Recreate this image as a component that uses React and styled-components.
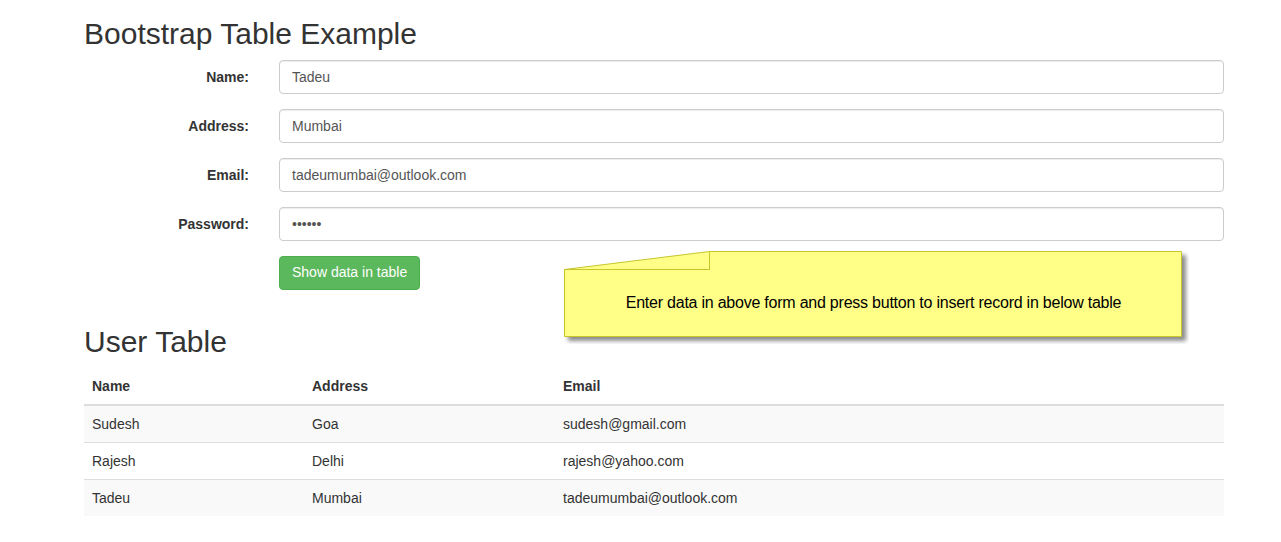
import React from 'react';
import styled, { createGlobalStyle } from 'styled-components';

const GlobalStyle = createGlobalStyle`
	* { box-sizing: border-box; }
	body {
		margin: 0;
		background: #fff;
		color: #333;
		font-family: "Liberation Sans", Arial, Helvetica, sans-serif;
		font-size: 14px;
		line-height: 1.42857;
	}
`

const Page = styled.div`
	position: relative;
	display: flow-root;
	width: 1140px;
	margin-left: 84px;
`

const Title = styled.h2`
	font-size: 30px;
	font-weight: 500;
	line-height: 1.1;
	margin: ${props => props.first ? '17px' : '20px'} 0 10px;
	color: #333;
`

const Form = styled.form`
	display: flex;
	flex-direction: column;
`

const FormGroup = styled.div`
	display: grid;
	grid-template-columns: 165px 945px;
	column-gap: 30px;
	align-items: center;
	margin-bottom: 15px;
`

const Label = styled.label`
	text-align: right;
	font-weight: bold;
	padding-top: 2px;
	grid-column: 1;
`

const Input = styled.input`
	grid-column: 2;
	display: block;
	width: 100%;
	height: 34px;
	padding: 6px 12px;
	font-family: inherit;
	font-size: 14px;
	line-height: 1.42857;
	color: #555;
	background: #fff;
	border: 1px solid #ccc;
	border-radius: 4px;
	box-shadow: inset 0 1px 1px rgba(0,0,0,.075);
	outline: none;
`

const Button = styled.button`
	grid-column: 2;
	justify-self: start;
	height: 34px;
	padding: 6px 12px;
	font-family: inherit;
	font-size: 14px;
	line-height: 1.42857;
	color: #fff;
	background: #5cb85c;
	border: 1px solid #4cae4c;
	border-radius: 4px;
	cursor: pointer;
`

const Note = styled.div`
	position: absolute;
	left: 480px;
	top: 251px;
	width: 625px;
	height: 93px;
`

const NoteShape = styled.svg`
	position: absolute;
	left: 0;
	top: 0;
`

const NoteText = styled.div`
	position: absolute;
	left: 0;
	top: 18px;
	width: 619px;
	height: 68px;
	display: flex;
	align-items: center;
	justify-content: center;
	color: #000;
	font-size: 16px;
	letter-spacing: -0.23px;
`

const Table = styled.table`
	width: 100%;
	border-collapse: collapse;
	border-spacing: 0;
	table-layout: fixed;
`

const Th = styled.th`
	text-align: left;
	padding: 9px 8px 7px;
	line-height: 1.42857;
	border-bottom: 2px solid #ddd;
	width: ${props => props.w || 'auto'};
`

const Tr = styled.tr`
	background: ${props => props.striped ? '#f9f9f9' : '#fff'};
`

const Td = styled.td`
	padding: 9px 8px 7px;
	line-height: 1.42857;
	border-top: 1px solid #ddd;
`

const users = [
	{ name: 'Sudesh', address: 'Goa', email: 'sudesh@gmail.com' },
	{ name: 'Rajesh', address: 'Delhi', email: 'rajesh@yahoo.com' },
	{ name: 'Tadeu', address: 'Mumbai', email: 'tadeumumbai@outlook.com' },
]

const App = () => {
	return (
		<>
			<GlobalStyle />
			<Page>
				<Title first>Bootstrap Table Example</Title>
				<Form onSubmit={e => e.preventDefault()}>
					<FormGroup>
						<Label>Name:</Label>
						<Input type="text" defaultValue="Tadeu" />
					</FormGroup>
					<FormGroup>
						<Label>Address:</Label>
						<Input type="text" defaultValue="Mumbai" />
					</FormGroup>
					<FormGroup>
						<Label>Email:</Label>
						<Input type="email" defaultValue="tadeumumbai@outlook.com" />
					</FormGroup>
					<FormGroup>
						<Label>Password:</Label>
						<Input type="password" defaultValue="123456" />
					</FormGroup>
					<FormGroup>
						<Button type="submit">Show data in table</Button>
					</FormGroup>
				</Form>

				<Note>
					<NoteShape width="625" height="93" viewBox="0 0 625 93">
						<defs>
							<filter id="blur" x="-5%" y="-5%" width="110%" height="120%">
								<feGaussianBlur stdDeviation="2" />
							</filter>
						</defs>
						<polygon points="4,22 149,4 622,4 622,90 4,90" fill="rgba(0,0,0,0.45)" filter="url(#blur)" />
						<polygon points="0.5,18.5 145.5,0.5 617.5,0.5 617.5,85.5 0.5,85.5" fill="#ffff88" stroke="#c6c62a" strokeWidth="1" />
						<polyline points="0.5,18.5 145.5,18.5 145.5,0.5" fill="none" stroke="#c6c62a" strokeWidth="1" />
					</NoteShape>
					<NoteText>Enter data in above form and press button to insert record in below table</NoteText>
				</Note>

				<Title>User Table</Title>
				<Table>
					<thead>
						<tr>
							<Th w="220px">Name</Th>
							<Th w="251px">Address</Th>
							<Th>Email</Th>
						</tr>
					</thead>
					<tbody>
						{users.map((u, idx) => (
							<Tr key={idx} striped={idx % 2 === 0}>
								<Td>{u.name}</Td>
								<Td>{u.address}</Td>
								<Td>{u.email}</Td>
							</Tr>
						))}
					</tbody>
				</Table>
			</Page>
		</>
	)
}

export default App;
